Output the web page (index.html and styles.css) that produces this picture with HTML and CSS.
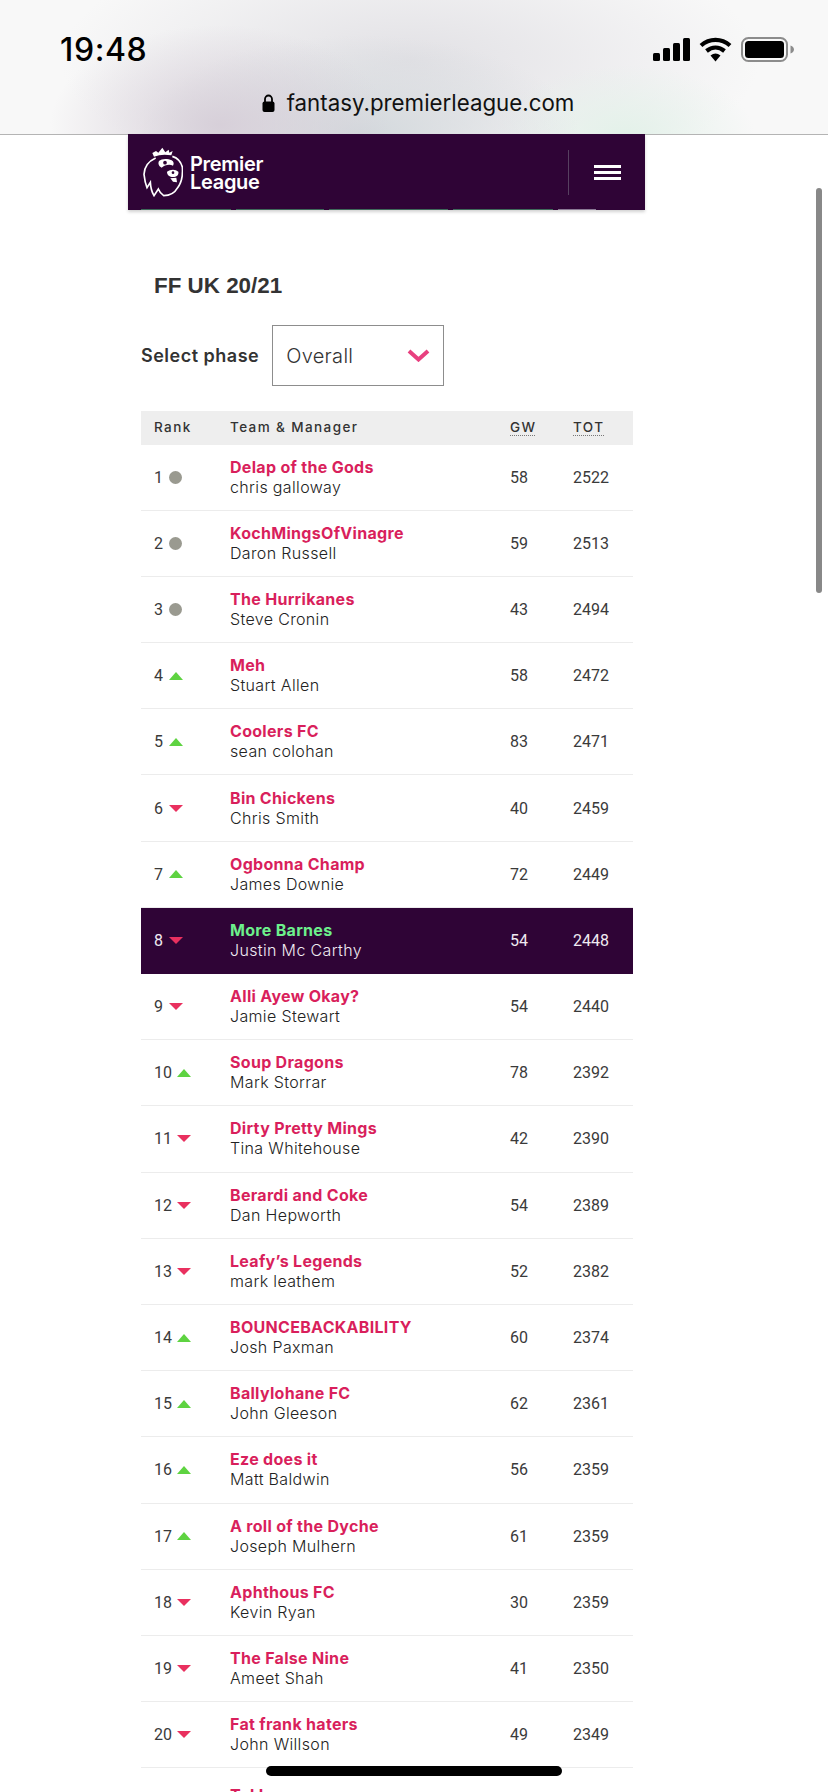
FILE: index.html
```html
<!DOCTYPE html>
<html lang="en">
<head>
<meta charset="utf-8">
<title>FF UK 20/21</title>
<link rel="stylesheet" href="styles.css">
</head>
<body>
<div class="screen">
  <header class="browser">
    <div class="status">
      <span class="time">19:48</span>
      <div class="status-icons">
        <svg class="signal" viewBox="0 0 37 23" width="37" height="23"><rect x="0" y="15" width="7" height="8" rx="1.5"/><rect x="10" y="10" width="7" height="13" rx="1.5"/><rect x="20" y="5" width="7" height="18" rx="1.5"/><rect x="30" y="0" width="7" height="23" rx="1.5"/></svg>
        <svg class="wifi" viewBox="0 0 33 25" width="33" height="25"><path d="M2 8.5C10.500 1 22.500 1 31 8.500" fill="none" stroke="#000" stroke-width="4.200"/><path d="M7.500 14C13 9.500 20 9.500 25.500 14" fill="none" stroke="#000" stroke-width="4.200"/><path d="M11.500 18.500Q16.500 14.500 21.500 18.500L16.500 24.500Z"/></svg>
        <svg class="battery" viewBox="0 0 54 25" width="54" height="25"><rect x="1" y="1" width="45" height="23" rx="6.500" fill="none" stroke="#8c8c8c" stroke-width="2"/><rect x="4" y="4" width="39" height="17" rx="3.500"/><path d="M49.500 8.500C52 9.500 53 11 53 12.500S52 15.500 49.500 16.500Z" fill="#8c8c8c"/></svg>
      </div>
    </div>
    <div class="address">
      <svg class="lock" viewBox="0 0 13 18" width="13" height="18"><path d="M3 8V5a3.500 3.500 0 0 1 7 0v3" fill="none" stroke="#000" stroke-width="1.800"/><rect x="0.500" y="7.500" width="12" height="10.500" rx="2"/></svg>
      <span class="url">fantasy.premierleague.com</span>
    </div>
  </header>

  <main class="site">
    <nav class="topnav">
      <div class="brand">
        <svg class="lion" viewBox="0 0 120 150" width="40" height="50">
          <path d="M28 18L39 12L46 17L58 2L67 16L77 8L79 17L89 12L85 25Q56 20 33 29Z" fill="#fff"/>
          <path d="M38 33C18 42 4 60 3 82C5 100 8 112 12 122L22 106C23 124 27 136 33 146L46 126C50 136 56 142 62 146C78 146 94 140 104 122C116 106 120 84 118 60C114 44 104 33 88 28" fill="none" stroke="#fff" stroke-width="5"/>
          <path d="M48 42C56 34 74 34 86 40C92 44 94 50 90 56C80 50 64 54 56 62C48 58 44 50 48 42Z" fill="#fff"/>
          <circle cx="66" cy="47" r="5.500" fill="#2f0436"/>
          <path d="M72 74C82 66 98 66 106 74C108 84 100 90 90 90C80 90 72 84 72 74Z" fill="#fff"/>
          <path d="M82 94L100 92L102 106L90 104Z" fill="#fff"/>
          <circle cx="90" cy="77" r="4" fill="#2f0436"/>
        </svg>
        <div class="wordmark"><span>Premier</span><span>League</span></div>
      </div>
      <button class="menu" aria-label="Menu"><i></i><i></i><i></i></button>
      <div class="slivers"><i class="s1"></i><i class="s2"></i><i class="s3"></i><i class="s4"></i><i class="s5"></i></div>
    </nav>

    <section class="league">
      <h2 class="title">FF UK 20/21</h2>
      <div class="phase">
        <label class="phase-label">Select phase</label>
        <div class="select">
          <span>Overall</span>
          <svg viewBox="0 0 23 13" width="23" height="13"><path d="M2 2L11.500 10.500L21 2" fill="none" stroke="#e8407f" stroke-width="4"/></svg>
        </div>
      </div>

      <div class="table">
        <div class="row head">
          <span>Rank</span><span>Team &amp; Manager</span><span><abbr>GW</abbr></span><span><abbr>TOT</abbr></span>
        </div>
        <div class="row"><div class="rank">1<i class="same"></i></div><div class="team"><b>Delap of the Gods</b><span>chris galloway</span></div><span>58</span><span>2522</span></div>
        <div class="row"><div class="rank">2<i class="same"></i></div><div class="team"><b>KochMingsOfVinagre</b><span>Daron Russell</span></div><span>59</span><span>2513</span></div>
        <div class="row"><div class="rank">3<i class="same"></i></div><div class="team"><b>The Hurrikanes</b><span>Steve Cronin</span></div><span>43</span><span>2494</span></div>
        <div class="row"><div class="rank">4<i class="up"></i></div><div class="team"><b>Meh</b><span>Stuart Allen</span></div><span>58</span><span>2472</span></div>
        <div class="row"><div class="rank">5<i class="up"></i></div><div class="team"><b>Coolers FC</b><span>sean colohan</span></div><span>83</span><span>2471</span></div>
        <div class="row"><div class="rank">6<i class="down"></i></div><div class="team"><b>Bin Chickens</b><span>Chris Smith</span></div><span>40</span><span>2459</span></div>
        <div class="row"><div class="rank">7<i class="up"></i></div><div class="team"><b>Ogbonna Champ</b><span>James Downie</span></div><span>72</span><span>2449</span></div>
        <div class="row mine"><div class="rank">8<i class="down"></i></div><div class="team"><b>More Barnes</b><span>Justin Mc Carthy</span></div><span>54</span><span>2448</span></div>
        <div class="row"><div class="rank">9<i class="down"></i></div><div class="team"><b>Alli Ayew Okay?</b><span>Jamie Stewart</span></div><span>54</span><span>2440</span></div>
        <div class="row"><div class="rank">10<i class="up"></i></div><div class="team"><b>Soup Dragons</b><span>Mark Storrar</span></div><span>78</span><span>2392</span></div>
        <div class="row"><div class="rank">11<i class="down"></i></div><div class="team"><b>Dirty Pretty Mings</b><span>Tina Whitehouse</span></div><span>42</span><span>2390</span></div>
        <div class="row"><div class="rank">12<i class="down"></i></div><div class="team"><b>Berardi and Coke</b><span>Dan Hepworth</span></div><span>54</span><span>2389</span></div>
        <div class="row"><div class="rank">13<i class="down"></i></div><div class="team"><b>Leafy’s Legends</b><span>mark leathem</span></div><span>52</span><span>2382</span></div>
        <div class="row"><div class="rank">14<i class="up"></i></div><div class="team"><b>BOUNCEBACKABILITY</b><span>Josh Paxman</span></div><span>60</span><span>2374</span></div>
        <div class="row"><div class="rank">15<i class="up"></i></div><div class="team"><b>Ballylohane FC</b><span>John Gleeson</span></div><span>62</span><span>2361</span></div>
        <div class="row"><div class="rank">16<i class="up"></i></div><div class="team"><b>Eze does it</b><span>Matt Baldwin</span></div><span>56</span><span>2359</span></div>
        <div class="row"><div class="rank">17<i class="up"></i></div><div class="team"><b>A roll of the Dyche</b><span>Joseph Mulhern</span></div><span>61</span><span>2359</span></div>
        <div class="row"><div class="rank">18<i class="down"></i></div><div class="team"><b>Aphthous FC</b><span>Kevin Ryan</span></div><span>30</span><span>2359</span></div>
        <div class="row"><div class="rank">19<i class="down"></i></div><div class="team"><b>The False Nine</b><span>Ameet Shah</span></div><span>41</span><span>2350</span></div>
        <div class="row"><div class="rank">20<i class="down"></i></div><div class="team"><b>Fat frank haters</b><span>John Willson</span></div><span>49</span><span>2349</span></div>
        <div class="row last"><div class="rank"></div><div class="team"><b>T J Lazer</b></div></div>
      </div>
    </section>
  </main>

  <div class="scrollbar"></div>
  <div class="home"></div>
</div>
</body>
</html>
```
FILE: styles.css
```css
* { box-sizing: border-box; }
html, body { margin: 0; padding: 0; }
body { background: #fff; color: #333; font-family: Inter, "Liberation Sans", sans-serif; }
.screen { position: relative; width: 828px; height: 1792px; overflow: hidden; background: #fff; }

.browser {
  height: 135px;
  border-bottom: 1px solid #b4b4b4;
  background:
    radial-gradient(ellipse 170px 100px at 220px 125px, rgba(214,206,216,.95) 0%, rgba(214,206,216,0) 100%),
    radial-gradient(ellipse 220px 100px at 360px 135px, #d3d8dc 0%, rgba(211,216,220,0) 100%),
    radial-gradient(ellipse 130px 70px at 625px 135px, #e3f1e9 0%, rgba(227,241,233,0) 100%),
    radial-gradient(ellipse 350px 130px at 410px 60px, #e2e1e5 0%, rgba(226,225,229,0) 100%),
    #f8f8f8;
}
.status { display: flex; justify-content: space-between; align-items: center; padding: 27px 33px 0 60px; height: 72px; }
.time { font-size: 32px; font-weight: 500; color: #000; line-height: 32px; letter-spacing: .6px; }
.status-icons { display: flex; align-items: center; gap: 9px; }
.status-icons svg { display: block; }
.address { display: flex; justify-content: center; align-items: center; gap: 12px; height: 34px; margin-top: 14px; padding-left: 8px; }
.url { font-size: 22.300px; color: #111; line-height: 30px; }
.lock { display: block; }

.site { width: 517px; margin-left: 128px; }
.topnav {
  position: relative;
  display: flex; justify-content: space-between; align-items: center;
  height: 76px; margin-top: -1px;
  background: #2f0436;
  box-shadow: 0 2px 3px rgba(0,0,0,.18);
}
.brand { display: flex; align-items: center; gap: 7px; padding-left: 15px; }
.lion { display: block; }
.wordmark { display: flex; flex-direction: column; margin-top: 2px; color: #fff; font-size: 20px; font-weight: 600; line-height: 18px; letter-spacing: -0.3px; }
.menu {
  display: flex; flex-direction: column; justify-content: space-between;
  width: 77px; height: 45px; padding: 15px 25px;
  background: none; border: 0; border-left: 1px solid #574060;
  border-radius: 0;
}
.menu i { display: block; height: 3px; background: #fff; width: 27px; }
.slivers { position: absolute; left: 13px; bottom: 0; display: flex; gap: 5px; }
.slivers i { display: block; height: 1.500px; background: #3e6a5a; }
.s1 { width: 90px; } .s2 { width: 88px; } .s3 { width: 119px; } .s4 { width: 100px; } .s5 { width: 38px; background: #8a7a95 !important; }

.league { padding: 0 12px 0 13px; }
.title { margin: 60px 0 0 13px; font-family: "Liberation Sans", Arial, sans-serif; font-size: 22.400px; font-weight: 700; line-height: 32px; color: #333; }
.phase { display: flex; align-items: center; gap: 13px; margin-top: 23px; }
.phase-label { font-size: 18px; font-weight: 600; color: #333; letter-spacing: .5px; }
.select {
  display: flex; align-items: center; justify-content: space-between;
  width: 172px; height: 61px; padding: 0 13px;
  border: 1.500px solid #8d8d8d;
  font-size: 20px; font-weight: 300; color: #333; letter-spacing: .3px;
}
.table { margin-top: 25px; width: 492px; }
.row {
  display: grid; grid-template-columns: 76px 280px 63px 60px; align-items: center;
  height: 66.200px; padding-left: 13px;
  border-bottom: 1px solid #ececec;
  font-family: Roboto, "Liberation Sans", sans-serif;
  font-size: 16px; font-weight: 400; color: #3a3a3a;
}
.head { height: 33.500px; padding-bottom: 2px; background: #eeeeee; border-bottom: 0; font-family: Inter, "Liberation Sans", sans-serif; font-size: 13.500px; font-weight: 500; letter-spacing: 1.400px; color: #333; }
abbr { text-decoration: underline dotted #777 1px; text-underline-offset: 3px; }
.rank { display: flex; align-items: center; gap: 5.500px; }
.rank i { display: block; }
.same { width: 13px; height: 13px; border-radius: 50%; background: #9a9a90; }
.up { width: 0; height: 0; border-left: 7.500px solid transparent; border-right: 7.500px solid transparent; border-bottom: 8px solid #5ed341; }
.down { width: 0; height: 0; border-left: 7.500px solid transparent; border-right: 7.500px solid transparent; border-top: 7.500px solid #e9305f; }
.team { display: flex; flex-direction: column; margin-top: -1px; line-height: 20px; font-family: Inter, "Liberation Sans", sans-serif; }
.team b { font-size: 16px; font-weight: 700; color: #d91f5c; letter-spacing: .3px; }
.team span { font-size: 16px; font-weight: 300; letter-spacing: .35px; color: #222; }
.mine { background: #2f0436; color: #f0eaf2; border-bottom: 0; }
.mine .team b { color: #6df08c; }
.mine .team span { color: #f0eaf2; }
.last { align-items: start; padding-top: 18px; }

.scrollbar { position: absolute; left: 816px; top: 188px; width: 6px; height: 405px; border-radius: 3px; background: #888; }
.home { position: absolute; left: 266px; top: 1766px; width: 296px; height: 10px; border-radius: 5px; background: #000; }
```
